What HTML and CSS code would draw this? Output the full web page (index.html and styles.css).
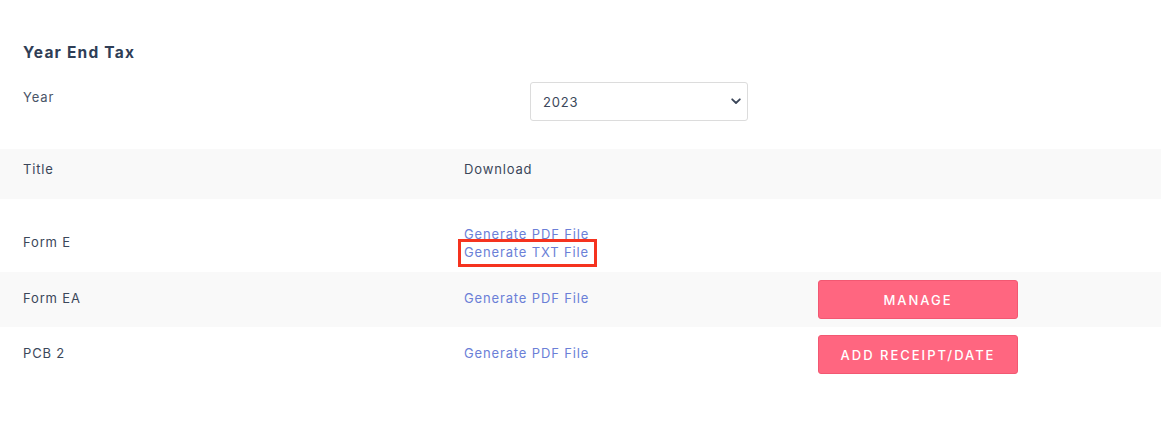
FILE: index.html
```html
<!DOCTYPE html>
<html>
<head>
<meta charset="utf-8">
<link rel="stylesheet" href="styles.css">
</head>
<body>
<div class="page">
  <h2 class="title">Year End Tax</h2>
  <div class="year-row">
    <label class="year-label">Year</label>
    <div class="select-box">
      <span class="select-value">2023</span>
      <svg class="chev" width="10" height="7" viewBox="0 0 10 7"><path d="M1.2 1.3 L5 5 L8.8 1.3" fill="none" stroke="#3a4558" stroke-width="1.8" stroke-linecap="round" stroke-linejoin="round"/></svg>
    </div>
  </div>
  <div class="table">
    <div class="row head">
      <div class="cell">Title</div>
      <div class="cell">Download</div>
      <div class="cell"></div>
    </div>
    <div class="row tall">
      <div class="cell">Form E</div>
      <div class="cell links">
        <a class="link">Generate PDF File</a>
        <a class="link marked">Generate TXT File</a>
      </div>
      <div class="cell"></div>
    </div>
    <div class="row shaded">
      <div class="cell">Form EA</div>
      <div class="cell"><a class="link">Generate PDF File</a></div>
      <div class="cell"><button class="btn">MANAGE</button></div>
    </div>
    <div class="row">
      <div class="cell">PCB 2</div>
      <div class="cell"><a class="link">Generate PDF File</a></div>
      <div class="cell"><button class="btn">ADD RECEIPT/DATE</button></div>
    </div>
  </div>
</div>
</body>
</html>
```

FILE: styles.css
```css
html, body {
  margin: 0;
  padding: 0;
  background: #ffffff;
}
body {
  font-family: "Inter", "Open Sans", sans-serif;
  color: #3b475a;
  font-size: 13px;
  letter-spacing: 0.85px;
}
.page {
  padding-top: 44px;
}
.title {
  margin: 0 0 0 23px;
  font-size: 15.5px;
  font-weight: 700;
  color: #2f3e56;
  line-height: 18px;
  letter-spacing: 1.2px;
}
.year-row {
  display: grid;
  grid-template-columns: 530px 218px;
  margin-top: 20px;
  align-items: start;
}
.year-label {
  padding-left: 23px;
  padding-top: 7px;
  line-height: 16px;
  color: #4a5568;
}
.select-box {
  height: 37px;
  border: 1px solid #dcdcdc;
  border-radius: 3px;
  display: flex;
  align-items: center;
  justify-content: space-between;
  padding: 0 6px 0 12px;
  box-sizing: content-box;
  width: 198px;
}
.select-value {
  color: #3b475a;
  font-size: 13px;
}
.chev {
  display: block;
}
.table {
  margin-top: 28px;
}
.row {
  display: grid;
  grid-template-columns: 441px 354px 366px;
  align-items: center;
  height: 55px;
}
.row .cell {
  padding-bottom: 4px;
}
.row .cell:last-child {
  padding-bottom: 0;
}
.row.head {
  background: #f9f9f9;
  height: 50px;
}
.row.head .cell {
  padding-bottom: 10px;
}
.row.tall {
  height: 73px;
}
.row.tall .cell {
  padding-top: 14px;
  padding-bottom: 2px;
}
.row.tall .cell.links {
  padding-top: 18px;
  padding-bottom: 0;
}
.row.shaded {
  background: #f9f9f9;
}
.cell {
  padding-left: 23px;
  line-height: 18px;
}
.links {
  display: flex;
  flex-direction: column;
  align-items: flex-start;
}
.link {
  color: #6b7fd7;
  text-decoration: none;
  line-height: 18px;
}
.marked {
  outline: 3px solid #f5331f;
  outline-offset: 0;
  padding: 2px 5px 3px 3px;
  margin-left: -3px;
  margin-top: -1px;
  line-height: 17px;
}
.btn {
  width: 200px;
  height: 39px;
  background: #ff6680;
  border: 1px solid #f25872;
  border-radius: 3px;
  color: #ffffff;
  font-family: "Inter", "Open Sans", sans-serif;
  font-size: 13px;
  font-weight: 500;
  letter-spacing: 2px;
  padding: 0;
}
```
